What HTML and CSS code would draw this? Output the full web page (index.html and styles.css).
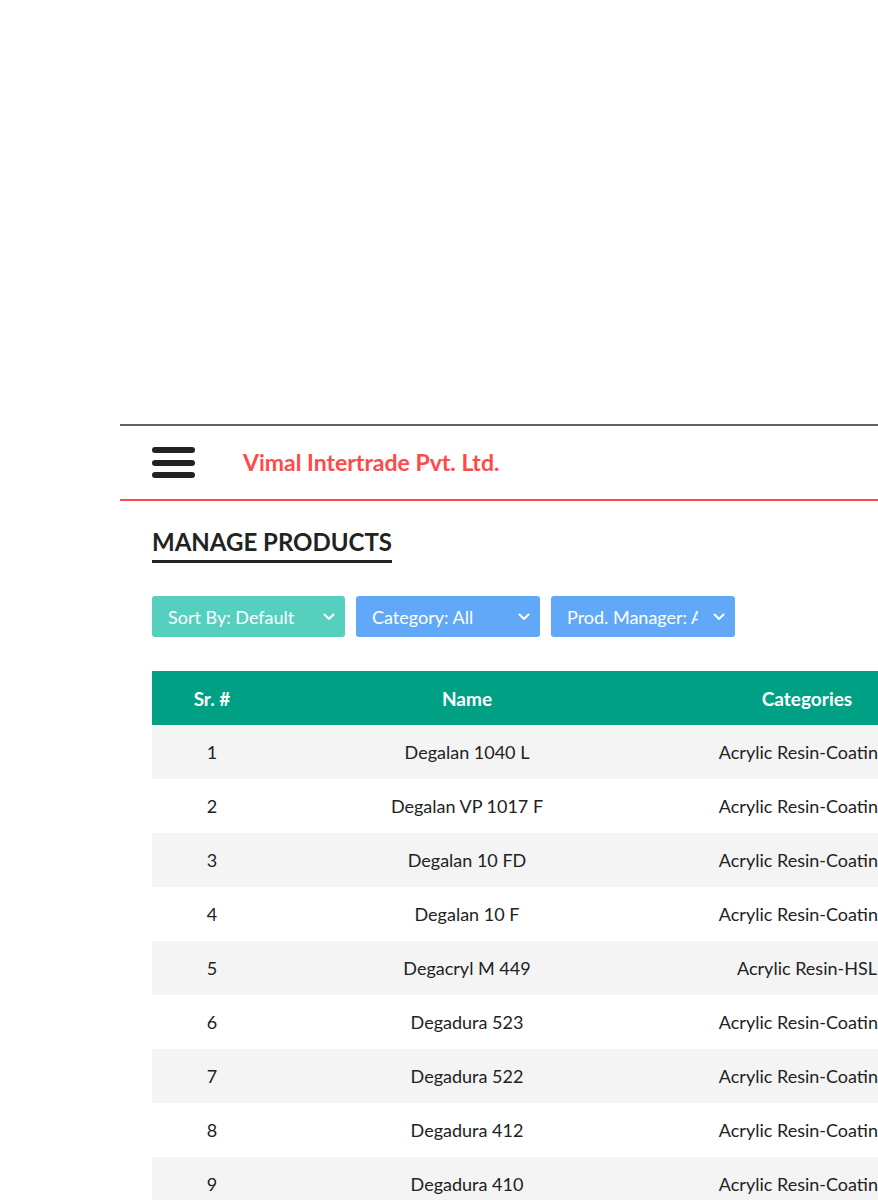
FILE: index.html
```html
<!DOCTYPE html>
<html lang="en">
<head>
<meta charset="utf-8">
<title>Manage Products</title>
<link rel="stylesheet" href="styles.css">
</head>
<body>
<div class="page">
  <header class="topbar">
    <div class="burger" aria-label="Menu">
      <span></span><span></span><span></span>
    </div>
    <div class="brand">Vimal Intertrade Pvt. Ltd.</div>
  </header>

  <main class="content">
    <h1 class="page-title">MANAGE PRODUCTS</h1>

    <div class="filters">
      <div class="dropdown dropdown-sort">
        <span class="dd-label">Sort By: Default</span>
        <svg class="chev" width="12" height="8" viewBox="0 0 12 8"><polyline points="1.5,1.5 6,6 10.5,1.5" fill="none" stroke="#fff" stroke-width="2" stroke-linecap="round" stroke-linejoin="round"/></svg>
      </div>
      <div class="dropdown dropdown-blue">
        <span class="dd-label">Category: All</span>
        <svg class="chev" width="12" height="8" viewBox="0 0 12 8"><polyline points="1.5,1.5 6,6 10.5,1.5" fill="none" stroke="#fff" stroke-width="2" stroke-linecap="round" stroke-linejoin="round"/></svg>
      </div>
      <div class="dropdown dropdown-blue">
        <span class="dd-label">Prod. Manager: All</span>
        <svg class="chev" width="12" height="8" viewBox="0 0 12 8"><polyline points="1.5,1.5 6,6 10.5,1.5" fill="none" stroke="#fff" stroke-width="2" stroke-linecap="round" stroke-linejoin="round"/></svg>
      </div>
    </div>

    <table class="products">
      <colgroup>
        <col class="c-sr"><col class="c-name"><col class="c-cat"><col class="c-rest">
      </colgroup>
      <thead>
        <tr><th>Sr. #</th><th>Name</th><th>Categories</th><th>Actions</th></tr>
      </thead>
      <tbody>
        <tr><td>1</td><td>Degalan 1040 L</td><td>Acrylic Resin-Coatings</td><td></td></tr>
        <tr><td>2</td><td>Degalan VP 1017 F</td><td>Acrylic Resin-Coatings</td><td></td></tr>
        <tr><td>3</td><td>Degalan 10 FD</td><td>Acrylic Resin-Coatings</td><td></td></tr>
        <tr><td>4</td><td>Degalan 10 F</td><td>Acrylic Resin-Coatings</td><td></td></tr>
        <tr><td>5</td><td>Degacryl M 449</td><td>Acrylic Resin-HSL</td><td></td></tr>
        <tr><td>6</td><td>Degadura 523</td><td>Acrylic Resin-Coatings</td><td></td></tr>
        <tr><td>7</td><td>Degadura 522</td><td>Acrylic Resin-Coatings</td><td></td></tr>
        <tr><td>8</td><td>Degadura 412</td><td>Acrylic Resin-Coatings</td><td></td></tr>
        <tr><td>9</td><td>Degadura 410</td><td>Acrylic Resin-Coatings</td><td></td></tr>
        <tr><td>10</td><td>Degadura 402</td><td>Acrylic Resin-Coatings</td><td></td></tr>
      </tbody>
    </table>
  </main>
</div>
</body>
</html>
```
FILE: styles.css
```css
html, body {
  margin: 0;
  padding: 0;
  overflow: hidden;
  background: #fff;
}
body {
  font-family: Lato, "Open Sans", sans-serif;
  color: #222;
}
.page {
  padding-top: 424px;
  padding-left: 120px;
  width: 1400px;
}
.topbar {
  display: flex;
  align-items: center;
  height: 73px;
  border-top: 2px solid #626262;
  border-bottom: 2px solid #ff4a4a;
  padding-left: 32px;
}
.burger {
  display: flex;
  flex-direction: column;
  gap: 6.5px;
  width: 43px;
}
.burger span {
  display: block;
  height: 6px;
  border-radius: 3px;
  background: #222;
}
.brand {
  margin-left: 48px;
  margin-bottom: 2px;
  color: #ff4a4a;
  font-size: 23px;
  font-weight: 700;
}
.content {
  padding-left: 32px;
}
.page-title {
  display: inline-block;
  margin: 27px 0 0;
  font-size: 24px;
  line-height: 28px;
  font-weight: 700;
  padding-bottom: 4px;
  border-bottom: 3px solid #222;
}
.filters {
  display: flex;
  gap: 11px;
  margin-top: 33px;
}
.dropdown {
  display: flex;
  align-items: center;
  box-sizing: border-box;
  height: 41px;
  padding: 0 10px 0 16px;
  border-radius: 3px;
  color: #fff;
  font-size: 18px;
}
.dropdown-sort {
  width: 193px;
  background: #55d0bf;
}
.dropdown-blue {
  width: 184px;
  background: #62a8f8;
}
.dd-label {
  flex: 1;
  white-space: nowrap;
  overflow: hidden;
}
.chev {
  flex: none;
  margin-left: 15px;
}
.products {
  margin-top: 34px;
  border-collapse: collapse;
  table-layout: fixed;
  width: 1200px;
}
.c-sr { width: 120px; }
.c-name { width: 390px; }
.c-cat { width: 290px; }
.products th, .products td {
  height: 54px;
  padding: 0;
  text-align: center;
  vertical-align: middle;
  white-space: nowrap;
}
.products th {
  background: #00a085;
  color: #fff;
  font-size: 19px;
  font-weight: 700;
}
.products td {
  font-size: 18px;
  color: #222;
}
.products tbody tr:nth-child(odd) td {
  background: #f4f4f4;
}
```
